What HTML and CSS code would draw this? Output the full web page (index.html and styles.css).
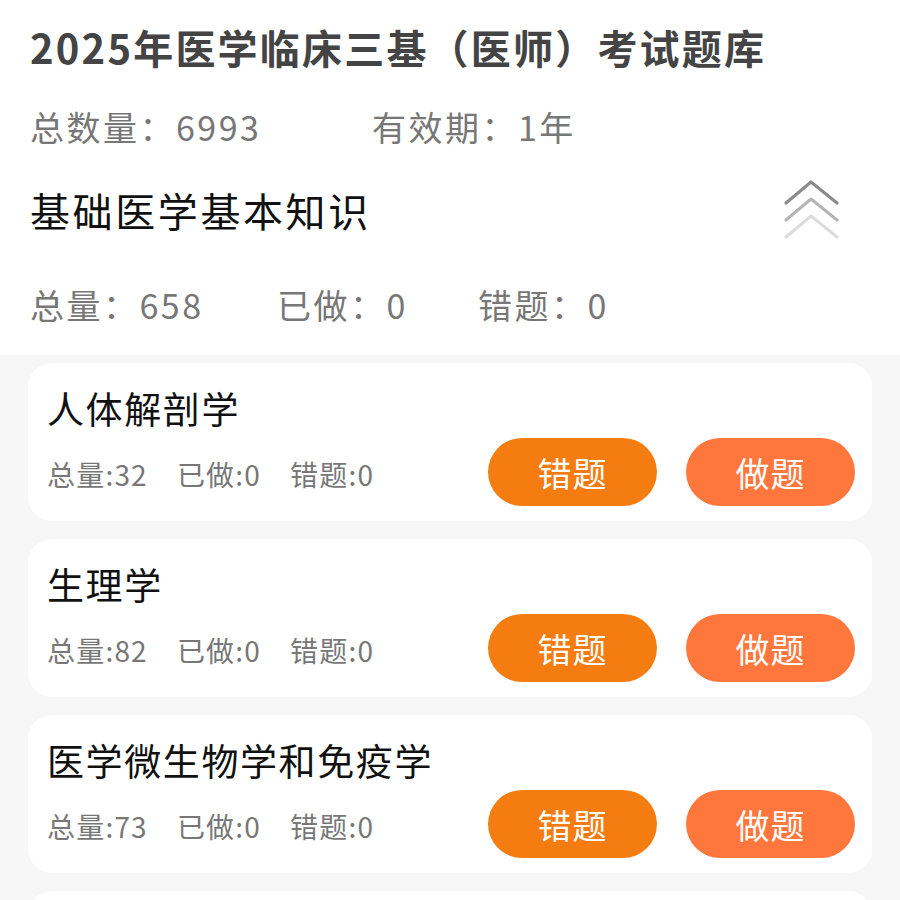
FILE: index.html
```html
<!DOCTYPE html>
<html lang="zh-CN">
<head>
  <meta charset="UTF-8">
  <title>2025年医学临床三基（医师）考试题库</title>
  <meta name="viewport" content="width=device-width, initial-scale=1.0">
  <link rel="stylesheet" href="styles.css">
</head>
<body>
  <header class="bank">
    <h1 class="bank-title">2025年医学临床三基（医师）考试题库</h1>
    <div class="bank-info">
      <span class="info-total">总数量：6993</span>
      <span>有效期：1年</span>
    </div>
    <div class="chapter">
      <h2 class="chapter-title">基础医学基本知识</h2>
      <svg class="fold" width="56" height="64" viewBox="0 0 56 64" fill="none" stroke-width="3" stroke-linecap="round" stroke-linejoin="round">
        <polyline points="2,25 27,4 53,25" stroke="#8a8a8a"/>
        <polyline points="2,42 27,21 53,42" stroke="#b4b4b4"/>
        <polyline points="2,59 27,38 53,59" stroke="#dcdcdc"/>
      </svg>
    </div>
    <div class="chapter-stats">
      <span class="stat-total">总量：658</span>
      <span class="stat-done">已做：0</span>
      <span>错题：0</span>
    </div>
  </header>

  <main class="subjects">
    <section class="card">
      <h3 class="card-title">人体解剖学</h3>
      <div class="card-row">
        <div class="card-stats">
          <span>总量:32</span><span>已做:0</span><span>错题:0</span>
        </div>
        <button class="btn btn-wrong">错题</button>
        <button class="btn btn-do">做题</button>
      </div>
    </section>
    <section class="card">
      <h3 class="card-title">生理学</h3>
      <div class="card-row">
        <div class="card-stats">
          <span>总量:82</span><span>已做:0</span><span>错题:0</span>
        </div>
        <button class="btn btn-wrong">错题</button>
        <button class="btn btn-do">做题</button>
      </div>
    </section>
    <section class="card">
      <h3 class="card-title">医学微生物学和免疫学</h3>
      <div class="card-row">
        <div class="card-stats">
          <span>总量:73</span><span>已做:0</span><span>错题:0</span>
        </div>
        <button class="btn btn-wrong">错题</button>
        <button class="btn btn-do">做题</button>
      </div>
    </section>
    <section class="card card-next"></section>
  </main>
</body>
</html>
```

FILE: styles.css
```css
body { margin: 0; background: #f7f7f7; font-family: "Noto Sans CJK SC", "Noto Sans", sans-serif; }

/* 题库头部 */
.bank { background: #fff; padding: 0 60px 5px 30px; }
.bank-title { margin: 0; font-size: 40px; font-weight: bold; color: #444; line-height: 94px; letter-spacing: 2.2px; white-space: nowrap; }
.bank-info { display: flex; color: #777; font-size: 34px; letter-spacing: 2.5px; line-height: 66px; }
.info-total { width: 342px; }
.chapter { display: flex; justify-content: space-between; align-items: center; height: 100px; }
.chapter-title { margin: 0; font-size: 40px; font-weight: normal; color: #111; letter-spacing: 2.6px; }
.chapter-stats { display: flex; color: #777; font-size: 34px; letter-spacing: 2.5px; line-height: 90px; }
.stat-total { width: 247px; }
.stat-done { width: 201px; }

/* 科目卡片 */
.subjects { padding: 8px 28px 0; }
.card { background: #fff; border-radius: 24px; height: 158px; box-sizing: border-box; padding: 17px 17px 0 19px; margin-bottom: 18px; }
.card-title { margin: 0; font-size: 37px; font-weight: normal; color: #111; letter-spacing: 1.6px; line-height: 56px; }
.card-row { display: flex; align-items: center; margin-top: 2px; }
.card-stats { flex: 1; display: flex; gap: 29px; color: #777; font-size: 28px; letter-spacing: 1.2px; padding-top: 3px; }
.btn { width: 169px; height: 68px; border: none; border-radius: 34px; color: #fff; font-family: inherit; font-size: 34px; letter-spacing: 1px; padding: 0; }
.btn-wrong { background: #f47c10; }
.btn-do { background: #ff773d; margin-left: 29px; }
```
